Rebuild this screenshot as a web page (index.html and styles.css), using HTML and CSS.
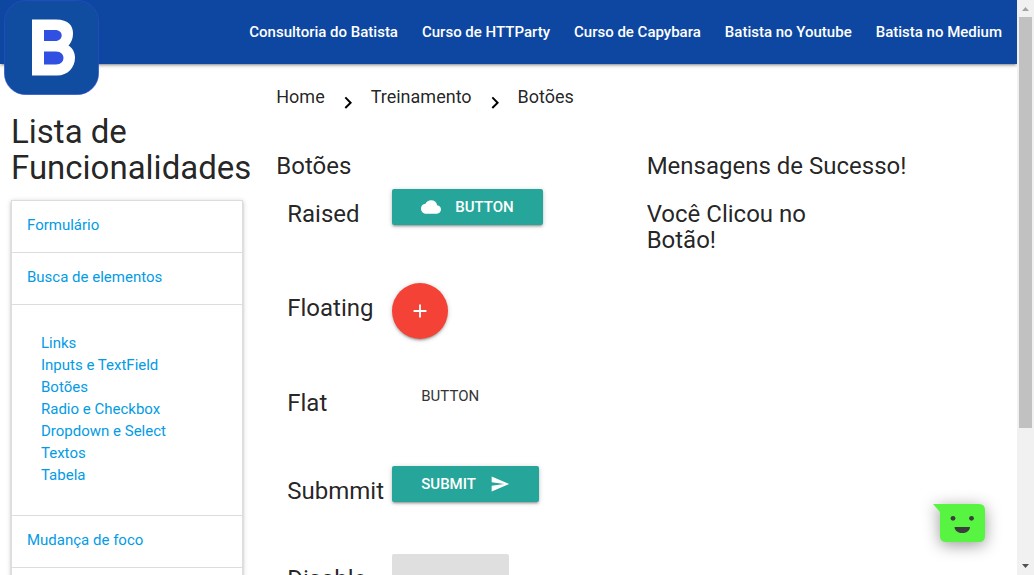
FILE: index.html
```html
<!DOCTYPE html>
<html lang="pt-BR">
<head>
<meta charset="utf-8">
<title>Botões</title>
<link rel="stylesheet" href="styles.css">
</head>
<body>
<div class="page">
  <header class="navbar">
    <a class="logo" href="#" aria-label="Batista">
      <svg width="95" height="95" viewBox="0 0 95 95">
        <rect x=".5" y=".5" width="94" height="94" rx="21" fill="#104ca0" stroke="#2a4ccb" stroke-width=".7"/>
        <path d="M28 19.500h24c13 0 17 7 17 13.500c0 6-2 10-4.500 12.500c4 2.500 6.500 7 6.500 12c0 10-7 18-18 18H28z" fill="#fff"/>
        <path d="M40 30h11c9 0 9 11 0 11H40zM40 51.500h12c10 0 10 13 0 13H40z" fill="#3050e2"/>
      </svg>
    </a>
    <nav class="nav-links">
      <a href="#">Consultoria do Batista</a>
      <a href="#">Curso de HTTParty</a>
      <a href="#">Curso de Capybara</a>
      <a href="#">Batista no Youtube</a>
      <a href="#">Batista no Medium</a>
    </nav>
  </header>

  <div class="layout">
    <aside class="sidebar">
      <h4 class="sidebar-title">Lista de Funcionalidades</h4>
      <ul class="menu">
        <li><a class="menu-header" href="#">Formulário</a></li>
        <li>
          <a class="menu-header" href="#">Busca de elementos</a>
          <div class="submenu">
            <a href="#">Links</a>
            <a href="#">Inputs e TextField</a>
            <a href="#">Botões</a>
            <a href="#">Radio e Checkbox</a>
            <a href="#">Dropdown e Select</a>
            <a href="#">Textos</a>
            <a href="#">Tabela</a>
          </div>
        </li>
        <li><a class="menu-header" href="#">Mudança de foco</a></li>
      </ul>
    </aside>

    <main class="content">
      <nav class="breadcrumbs" aria-label="Trilha">
        <a href="#">Home</a>
        <svg class="chevron" width="24" height="24" viewBox="0 0 24 24"><path d="M8.600 16.300l4.600-4.600-4.600-4.600L10 5.700l6 6-6 6z"/></svg>
        <a href="#">Treinamento</a>
        <svg class="chevron" width="24" height="24" viewBox="0 0 24 24"><path d="M8.600 16.300l4.600-4.600-4.600-4.600L10 5.700l6 6-6 6z"/></svg>
        <a href="#">Botões</a>
      </nav>

      <div class="columns">
        <section>
          <h5 class="heading">Botões</h5>
          <div class="row row-raised">
            <h5 class="label">Raised</h5>
            <button class="btn" type="button">
              <svg width="20" height="20" viewBox="0 0 24 24" fill="currentColor"><path d="M19.350 10.040A7.490 7.490 0 0 0 12 4C9.110 4 6.600 5.640 5.350 8.040A5.994 5.994 0 0 0 0 14c0 3.310 2.690 6 6 6h13c2.760 0 5-2.240 5-5 0-2.640-2.050-4.780-4.650-4.960z"/></svg>
              Button
            </button>
          </div>
          <div class="row row-floating">
            <h5 class="label">Floating</h5>
            <button class="btn-floating" type="button" aria-label="Adicionar">
              <svg width="24" height="24" viewBox="0 0 24 24" fill="currentColor"><path d="M19 13h-6v6h-2v-6H5v-2h6V5h2v6h6z"/></svg>
            </button>
          </div>
          <div class="row">
            <h5 class="label">Flat</h5>
            <button class="btn btn-flat" type="button">Button</button>
          </div>
          <div class="row">
            <h5 class="label">Submmit</h5>
            <button class="btn" type="submit">
              Submit
              <svg width="20" height="20" viewBox="0 0 24 24" fill="currentColor"><path d="M2.010 21L23 12 2.010 3 2 10l15 2-15 2z"/></svg>
            </button>
          </div>
          <div class="row">
            <h5 class="label">Disable</h5>
            <button class="btn btn-disabled" type="button" disabled aria-label="Button"></button>
          </div>
        </section>
        <section>
          <h5 class="heading">Mensagens de Sucesso!</h5>
          <h5 class="message">Você Clicou no Botão!</h5>
        </section>
      </div>
    </main>
  </div>

  <button class="chat" type="button" aria-label="Chat">
    <svg width="52" height="38" viewBox="0 0 52 38">
      <path d="M0 0h46q6 0 6 6v26q0 6-6 6H13q-6 0-6-6V8z" fill="#58f442"/>
      <circle cx="20" cy="14.300" r="2.400" fill="#3c3c3c"/>
      <circle cx="38.500" cy="14.300" r="2.400" fill="#3c3c3c"/>
      <path d="M21.500 23h15.500c-.5 8-15 8-15.500 0z" fill="#3c3c3c"/>
    </svg>
  </button>
</div>

<div class="scrollbar" aria-hidden="true">
  <svg class="arrow" width="17" height="17" viewBox="0 0 17 17"><path d="M5 11l3.500-4 3.500 4z" fill="#a3a3a3"/></svg>
  <div class="track"><div class="thumb"></div></div>
  <svg class="arrow" width="17" height="17" viewBox="0 0 17 17"><path d="M5 6l3.500 4L12 6z" fill="#505050"/></svg>
</div>
</body>
</html>
```
FILE: styles.css
```css
* { box-sizing: border-box; }

body {
  margin: 0;
  height: 100vh;
  display: flex;
  overflow: hidden;
  background: #fff;
  color: rgba(0, 0, 0, 0.87);
  font: 400 15px/22px Roboto, sans-serif;
}

a { color: #039be5; text-decoration: none; }
h4, h5 { margin: 0; font-weight: 400; }
button { font-family: inherit; border: 0; cursor: pointer; }
svg { display: block; flex: none; }

.page {
  position: relative;
  flex: 1;
  min-width: 0;
  overflow: hidden;
}

.navbar {
  position: relative;
  display: flex;
  justify-content: flex-end;
  height: 64px;
  background: #0d47a1;
  box-shadow: 0 2px 2px rgba(0, 0, 0, 0.14), 0 3px 1px -2px rgba(0, 0, 0, 0.12), 0 1px 5px rgba(0, 0, 0, 0.2);
}
.logo { position: absolute; left: 4px; top: 0; }
.nav-links { display: flex; gap: 24px; padding-right: 15px; }
.nav-links a {
  color: #fff;
  line-height: 64px;
  font-weight: 500;
  white-space: nowrap;
}

.layout { display: flex; }
.sidebar { width: 25%; flex: none; padding: 50px 11px 0; }
.sidebar-title { font-size: 33px; line-height: 36px; }
.menu {
  margin: 14px 0 0;
  padding: 0 0 52px;
  list-style: none;
  border: 1px solid #ddd;
  box-shadow: 0 2px 2px rgba(0, 0, 0, 0.14), 0 3px 1px -2px rgba(0, 0, 0, 0.12), 0 1px 5px rgba(0, 0, 0, 0.2);
}
.menu-header {
  display: block;
  padding: 13px 15px 16px;
  border-bottom: 1px solid #ddd;
}
.submenu {
  display: flex;
  flex-direction: column;
  align-items: flex-start;
  padding: 27px 29px 29px;
  border-bottom: 1px solid #ddd;
}

.content { flex: 1; min-width: 0; padding: 20px 0 0 22px; }
.breadcrumbs { display: flex; gap: 11px; font-size: 18px; line-height: 26px; }
.breadcrumbs a { color: rgba(0, 0, 0, 0.87); }
.chevron { margin-top: 7px; }

.columns { display: grid; grid-template-columns: 1fr 1fr; margin-top: 36px; }
.heading, .label, .message { font-size: 24px; line-height: 26px; }
.heading { margin-top: 2px; }
.message { margin-top: 22px; max-width: 200px; }
.row {
  display: grid;
  grid-template-columns: 105px auto;
  justify-content: start;
  align-items: start;
  min-height: 88px;
  padding-left: 11px;
}
.row-raised { min-height: 94px; margin-top: 10px; }
.row-floating { min-height: 95px; }
.label { margin-top: 12px; }

.btn {
  display: flex;
  align-items: center;
  gap: 14px;
  height: 36px;
  padding: 0 29px;
  border-radius: 2px;
  background: #26a69a;
  color: #fff;
  font-size: 15px;
  font-weight: 500;
  text-transform: uppercase;
  box-shadow: 0 2px 2px rgba(0, 0, 0, 0.14), 0 3px 1px -2px rgba(0, 0, 0, 0.12), 0 1px 5px rgba(0, 0, 0, 0.2);
}
.btn-flat { background: transparent; color: #343434; font-weight: 400; box-shadow: none; }
.btn-disabled { min-width: 117px; background: #dfdfdf; box-shadow: none; cursor: default; }
.btn-floating {
  display: grid;
  place-items: center;
  width: 56px;
  height: 56px;
  padding: 0;
  border-radius: 50%;
  background: #f44336;
  color: #fff;
  box-shadow: 0 2px 2px rgba(0, 0, 0, 0.14), 0 3px 1px -2px rgba(0, 0, 0, 0.12), 0 1px 5px rgba(0, 0, 0, 0.2);
}
.btn-floating svg { width: 22px; height: 22px; }

.chat {
  position: absolute;
  right: 32px;
  bottom: 33px;
  padding: 0;
  background: none;
  filter: drop-shadow(0 3px 8px rgba(0, 0, 0, 0.4));
}

.scrollbar {
  display: flex;
  flex-direction: column;
  width: 17px;
  flex: none;
  background: #f1f1f1;
}
.track { flex: 1; padding: 0 2px; }
.thumb { height: 76%; background: #c1c1c1; }
```
